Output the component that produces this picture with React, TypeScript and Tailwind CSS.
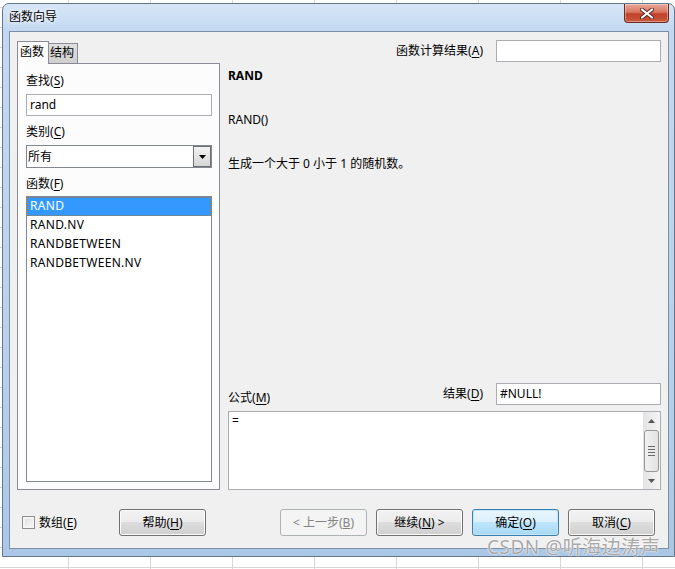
import { ReactNode } from "react";

// win7 style "函数向导" dialog over a spreadsheet grid

const FONT = "font-['Noto_Sans','Noto_Sans_CJK_SC',sans-serif]";

function Hot({ text, k }: { text: string; k: string }) {
  return (
    <>
      {text}(<u className="underline-offset-2">{k}</u>)
    </>
  );
}

function CloseButton() {
  return (
    <div className="w-[45px] h-[19px] rounded-b-[4px] border border-t-0 border-[#6b2a22] bg-[linear-gradient(180deg,#e9a99b_0%,#d9775f_45%,#c1412b_55%,#c95a3c_100%)] flex items-center justify-center shadow-[inset_0_0_0_1px_rgba(255,255,255,0.35)]">
      <svg width="14" height="11" viewBox="0 0 14 11">
        <path d="M2 1.5 L12 9.5 M12 1.5 L2 9.5" stroke="#5a2a25" strokeWidth="4" strokeLinecap="round" />
        <path d="M2 1.5 L12 9.5 M12 1.5 L2 9.5" stroke="#ffffff" strokeWidth="2.2" strokeLinecap="round" />
      </svg>
    </div>
  );
}

type BtnKind = "normal" | "disabled" | "primary";

function Btn({ children, kind = "normal" }: { children: ReactNode; kind?: BtnKind }) {
  const look =
    kind === "disabled"
      ? "border-[#adb2b5] bg-[#f4f4f4] text-[#838383]"
      : kind === "primary"
        ? "border-[#3c7fb1] bg-[linear-gradient(180deg,#eaf6fd_0%,#d9f0fc_50%,#bee6fd_50%,#a7d9f5_100%)] shadow-[inset_0_0_0_1px_#c5e6f9]"
        : "border-[#707070] bg-[linear-gradient(180deg,#f2f2f2_0%,#ebebeb_50%,#dddddd_50%,#cfcfcf_100%)] shadow-[inset_0_0_0_1px_#fcfcfc]";
  return (
    <div className={`w-[87px] h-[27px] rounded-[3px] border flex items-center justify-center ${look}`}>
      {children}
    </div>
  );
}

function TextBox({ value, className = "" }: { value?: string; className?: string }) {
  return (
    <div
      className={`h-[22px] border border-[#abadb3] bg-white flex items-center pl-[3px] leading-none ${className}`}
    >
      {value}
    </div>
  );
}

const FUNCS = ["RAND", "RAND.NV", "RANDBETWEEN", "RANDBETWEEN.NV"];

function LeftPanel() {
  return (
    <div className="w-[203px] mt-[1px] flex flex-col">
      <div className="h-[22px] flex items-end relative z-10">
        <div className="w-[32px] h-[23px] -mb-[1px] border border-b-0 border-[#898c95] bg-[#fcfcfc] flex items-start pl-[2px] pt-[2px] leading-[16px]">
          函数
        </div>
        <div className="w-[29px] h-[20px] border border-l-0 border-b-0 border-[#898c95] bg-[linear-gradient(180deg,#e0e0e0,#cfcfcf)] flex items-start pl-[1px] pt-[1px] leading-[16px]">
          结构
        </div>
      </div>
      <div className="h-[427px] border border-[#898c95] bg-[#fcfcfc] pl-[8px] pr-[7px] pt-[9px] pb-[7px] flex flex-col">
        <div className="leading-[16px]">
          <Hot text="查找" k="S" />
        </div>
        <TextBox value="rand" className="mt-[5px] h-[21px]" />
        <div className="mt-[8px] leading-[16px]">
          <Hot text="类别" k="C" />
        </div>
        <div className="mt-[5px] h-[23px] border border-[#828790] bg-white flex items-center">
          <span className="flex-1 pl-[1px] leading-none">所有</span>
          <div className="w-[18px] h-[21px] border border-[#707070] bg-[linear-gradient(180deg,#f2f2f2,#d6d6d6)] flex items-center justify-center">
            <svg width="7" height="4" viewBox="0 0 7 4">
              <path d="M0 0 H7 L3.5 4 Z" fill="#000" />
            </svg>
          </div>
        </div>
        <div className="mt-[8px] leading-[16px]">
          <Hot text="函数" k="F" />
        </div>
        <div className="mt-[4px] flex-1 border border-[#828790] bg-white flex flex-col tracking-[0.3px]">
          {FUNCS.map((f, i) => (
            <div
              key={f}
              className={
                i === 0
                  ? "h-[19px] flex items-center pl-[2px] pb-[2px] bg-[#3399ff] text-white border border-dotted border-[#a8783a]"
                  : "h-[19px] flex items-center pl-[3px] pb-[2px]"
              }
            >
              {f}
            </div>
          ))}
        </div>
      </div>
    </div>
  );
}

function FormulaBox() {
  return (
    <div className="mt-[6px] h-[79px] border border-[#abadb3] bg-white flex">
      <div className="flex-1 pl-[3px] pt-[1px] leading-[16px]">=</div>
      <div className="w-[17px] bg-[linear-gradient(90deg,#e3e3e3,#f4f4f4)] flex flex-col">
        <div className="h-[17px] flex items-center justify-center">
          <svg width="7" height="4" viewBox="0 0 7 4">
            <path d="M0 4 H7 L3.5 0 Z" fill="#555" />
          </svg>
        </div>
        <div className="flex-1 px-[1px]">
          <div className="mt-[1px] h-[42px] rounded-[3px] border border-[#979797] bg-[linear-gradient(90deg,#f1f1f1,#e2e2e2)] flex flex-col items-center justify-center gap-[2px]">
            <div className="w-[7px] h-px bg-[#6a6a6a]" />
            <div className="w-[7px] h-px bg-[#6a6a6a]" />
            <div className="w-[7px] h-px bg-[#6a6a6a]" />
            <div className="w-[7px] h-px bg-[#6a6a6a]" />
          </div>
        </div>
        <div className="h-[17px] flex items-center justify-center">
          <svg width="7" height="4" viewBox="0 0 7 4">
            <path d="M0 0 H7 L3.5 4 Z" fill="#555" />
          </svg>
        </div>
      </div>
    </div>
  );
}

function RightPanel() {
  return (
    <div className="flex-1 flex flex-col">
      <div className="flex items-center justify-end gap-[13px]">
        <span className="leading-[16px]">
          <Hot text="函数计算结果" k="A" />
        </span>
        <TextBox className="w-[165px]" />
      </div>
      <div className="mt-[6px] leading-[16px] font-bold">RAND</div>
      <div className="mt-[28px] leading-[16px]">RAND()</div>
      <div className="mt-[28px] leading-[16px]">生成一个大于 0 小于 1 的随机数。</div>
      <div className="flex-1" />
      <div className="flex items-end justify-between">
        <span className="leading-[16px] -mb-[1px]">
          <Hot text="公式" k="M" />
        </span>
        <div className="flex items-center gap-[13px]">
          <span className="leading-[16px]">
            <Hot text="结果" k="D" />
          </span>
          <TextBox value="#NULL!" className="w-[165px]" />
        </div>
      </div>
      <FormulaBox />
    </div>
  );
}

export default function App() {
  return (
    <div
      className={`relative w-[675px] h-[569px] overflow-hidden bg-white bg-[linear-gradient(90deg,#d6d6d6_1px,transparent_1px),linear-gradient(#d6d6d6_1px,transparent_1px)] bg-[length:82px_100%,100%_20px] bg-[position:68px_0,0_7px] text-[12px] text-black ${FONT}`}
    >
      <div className="ml-[2px] mt-[3px] w-[673px] h-[554px] rounded-t-[7px] border border-[#63778f] bg-[linear-gradient(180deg,#d6e6f7_0px,#c3d9f1_26px,#b9d1ec_60%,#abc7e6_100%)] flex flex-col">
        <div className="h-[27px] flex items-start justify-between pl-[6px] pr-[5px]">
          <span className="mt-[5px] leading-[16px] [text-shadow:0_0_6px_#fff,0_0_3px_#fff]">函数向导</span>
          <CloseButton />
        </div>
        <div className="ml-[6px] w-[660px] h-[518px] border border-[#7b8ea5] bg-[#f0f0f0] flex flex-col">
          <div className="h-[458px] pt-[8px] pl-[7px] pr-[7px] flex gap-[8px]">
            <LeftPanel />
            <RightPanel />
          </div>
          <div className="mt-[19px] h-[27px] pl-[12px] pr-[13px] flex items-center">
            <div className="w-[97px] flex items-center gap-[4px]">
              <div className="w-[13px] h-[13px] border border-[#8e8f8f] bg-[linear-gradient(135deg,#dcdcdc,#fbfbfb)] shadow-[inset_0_0_0_2px_#f4f4f4]" />
              <span className="leading-[16px]">
                <Hot text="数组" k="E" />
              </span>
            </div>
            <Btn>
              <Hot text="帮助" k="H" />
            </Btn>
            <div className="ml-auto flex gap-[9px]">
              <Btn kind="disabled">
                &lt; 上一步(<u>B</u>)
              </Btn>
              <Btn>
                继续(<u>N</u>) &gt;
              </Btn>
              <Btn kind="primary">
                <Hot text="确定" k="O" />
              </Btn>
              <Btn>
                <Hot text="取消" k="C" />
              </Btn>
            </div>
          </div>
        </div>
      </div>
      <div className="absolute left-[487px] top-[535px] text-[19px] leading-[24px] tracking-[0.5px] text-[#a9a9a9] [text-shadow:0_0_2px_#fff,0_0_1px_#fff] font-['Noto_Sans','Noto_Sans_CJK_SC',sans-serif]">
        CSDN @听海边涛声
      </div>
    </div>
  );
}
